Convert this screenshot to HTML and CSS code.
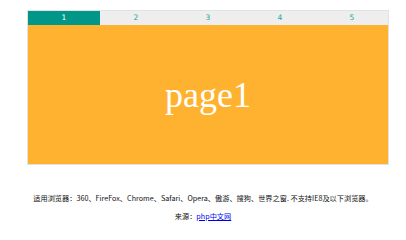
FILE: index.html
```html
<!DOCTYPE html>
<html lang="zh-CN">
  <head>
    <meta charset="UTF-8" />
    <title>tab切换</title>
    <link rel="stylesheet" href="styles.css">
  </head>
  <body>
    <div class="tabs">
      <ul class="tab-nav">
        <li class="active">1</li>
        <li>2</li>
        <li>3</li>
        <li>4</li>
        <li>5</li>
      </ul>
      <div class="tab-panel">page1</div>
    </div>

    <div class="info">
      <p>适用浏览器：360、FireFox、Chrome、Safari、Opera、傲游、搜狗、世界之窗. 不支持IE8及以下浏览器。</p>
      <p>来源：<a href="#">php中文网</a></p>
    </div>
  </body>
</html>
```

FILE: styles.css
```css
body {
  margin: 0;
  font-family: "Noto Sans CJK SC", "Noto Sans", sans-serif;
  background: #fff;
}

.tabs {
  width: 360px;
  margin: 10px 0 0 27px;
  border: 1px solid #e2e2e2;
}

.tab-nav {
  list-style: none;
  margin: 0;
  padding: 0;
  display: flex;
  background: #eee;
}

.tab-nav li {
  flex: 1;
  height: 14px;
  line-height: 14px;
  text-align: center;
  font-family: "DejaVu Sans", sans-serif;
  font-size: 7.5px;
  color: #26a69a;
}

.tab-nav li.active {
  background: #009688;
  color: #fff;
}

.tab-panel {
  height: 139px;
  background: #ffb22f;
  color: #fff;
  font-family: "Liberation Serif", serif;
  font-size: 36px;
  display: flex;
  align-items: center;
  justify-content: center;
}

.info {
  margin-top: 28px;
  text-align: center;
  font-size: 7.2px;
  color: #111;
  white-space: nowrap;
}

.info p {
  margin: 0 0 8px;
  line-height: 10px;
}

.info a {
  color: #0000ee;
}
```
